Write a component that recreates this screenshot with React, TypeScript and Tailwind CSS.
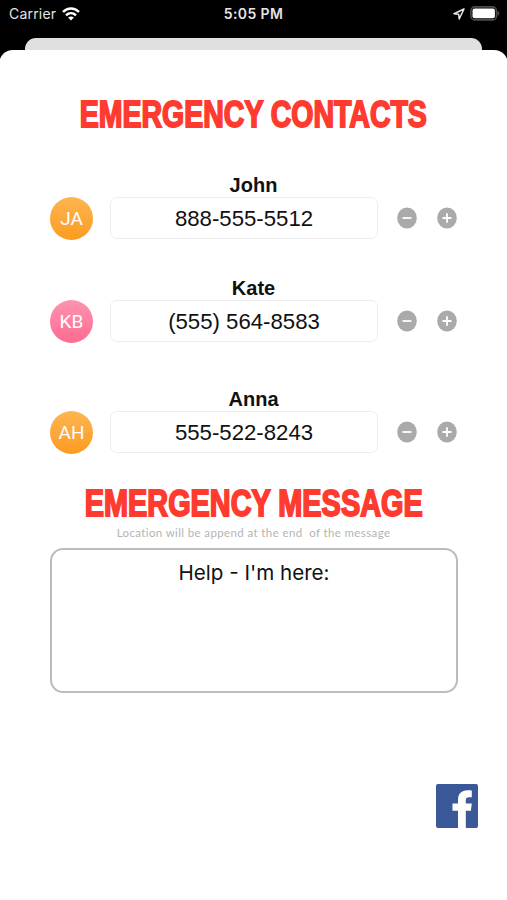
import clsx from "clsx";

const CONTACTS = [
  { initials: "JA", name: "John", phone: "888-555-5512", avatar: "from-[#fdb54f] to-[#fc9b1c]" },
  { initials: "KB", name: "Kate", phone: "(555) 564-8583", avatar: "from-[#ff92b0] to-[#fc6b92]" },
  { initials: "AH", name: "Anna", phone: "555-522-8243", avatar: "from-[#fdb54f] to-[#fc9b1c]" },
];

function StatusBar() {
  return (
    <div className="grid h-[38px] grid-cols-3 items-start px-2 pt-1.5 font-['Inter',sans-serif] text-[14px] leading-4 text-[#e4e4e4]">
      <div className="flex items-center gap-1.5 pl-px">
        <span className="text-[14px] tracking-[0.2px]">Carrier</span>
        <svg width="18" height="14" viewBox="0 0 18 14" fill="none" stroke="#fff" strokeWidth="2.5">
          <path d="M1 5C5.6.3 12.4.3 17 5" />
          <path d="M4 8.3c2.9-2.8 7.1-2.8 10 0" />
          <path d="M9 13.5 6.1 10.6c1.7-1.5 4.1-1.5 5.8 0Z" fill="#fff" stroke="none" />
        </svg>
      </div>
      <span className="text-center font-semibold tracking-[0.4px]">5:05 PM</span>
      <div className="flex items-center justify-end gap-[5px]">
        <svg width="12" height="12" viewBox="0 0 12 12" fill="none" stroke="#e8e8e8" strokeWidth="1.5" strokeLinejoin="round">
          <path d="M11 1 1 5.8l4.7.5.5 4.7Z" />
        </svg>
        <svg width="30" height="15" viewBox="0 0 30 15" className="-mr-px">
          <rect x=".9" y=".9" width="25.6" height="13" rx="4" fill="none" stroke="#4c4c4c" strokeWidth="1.6" />
          <rect x="2.5" y="2.5" width="22.4" height="9.8" rx="2" fill="#fff" />
          <path d="M27.5 4.8c2.4 1 2.4 4.2 0 5.2Z" fill="#4c4c4c" />
        </svg>
      </div>
    </div>
  );
}

function Heading({ children, className }: { children: string; className: string }) {
  return (
    <h1 className="flex h-[38px] justify-center font-['Liberation_Sans',sans-serif] text-[36px] font-bold leading-[38px] whitespace-nowrap text-[#ff3b30]">
      <span className={clsx("[-webkit-text-stroke:1.9px_#ff3b30]", className)}>{children}</span>
    </h1>
  );
}

function RoundButton({ plus = false }: { plus?: boolean }) {
  return (
    <button type="button" aria-label={plus ? "Add contact" : "Remove contact"}>
      <svg width="20" height="22" viewBox="0 0 20 22">
        <ellipse cx="10" cy="11" rx="9.8" ry="10.6" fill="#aaa" />
        <path d={plus ? "M5.5 11h9M10 6.2v9.6" : "M5.5 11h9"} stroke="#fff" strokeWidth="1.8" />
      </svg>
    </button>
  );
}

function ContactRow({ contact, className }: { contact: (typeof CONTACTS)[number]; className?: string }) {
  return (
    <div className={clsx("font-['Liberation_Sans',sans-serif]", className)}>
      <p className="h-6 text-center text-[20px] font-bold leading-6 text-[#111]">{contact.name}</p>
      <div className="flex h-[43px] items-start pl-[50px]">
        <div
          className={clsx(
            "flex size-[43px] shrink-0 items-center justify-center rounded-full bg-linear-to-b pt-px font-['Roboto',sans-serif] text-[19px] text-white",
            contact.avatar
          )}
        >
          {contact.initials}
        </div>
        <div className="ml-[17px] flex h-[42px] w-[268px] items-center justify-center rounded-[7px] border border-[#ededed] pt-px text-[22.2px] text-[#111]">
          {contact.phone}
        </div>
        <div className="ml-[19px] flex h-[42px] items-center gap-5">
          <RoundButton />
          <RoundButton plus />
        </div>
      </div>
    </div>
  );
}

export default function App() {
  return (
    <div className="flex h-[900px] w-[507px] flex-col overflow-hidden bg-black">
      <StatusBar />
      <div className="mx-[25px] h-3 shrink-0 rounded-t-[11px] bg-[#e0e0e0]" />
      <main className="-mx-px flex-1 rounded-t-[14px] bg-white px-px pt-[46px]">
        <Heading className="scale-x-[0.791]">EMERGENCY CONTACTS</Heading>
        <ContactRow contact={CONTACTS[0]} className="mt-[39px]" />
        <ContactRow contact={CONTACTS[1]} className="mt-9" />
        <ContactRow contact={CONTACTS[2]} className="mt-11" />
        <div className="mt-[31px]">
          <Heading className="scale-x-[0.802]">EMERGENCY MESSAGE</Heading>
        </div>
        <p className="mt-0.5 h-4 text-center font-['Lato',sans-serif] text-[11.5px] leading-4 tracking-[0.38px] whitespace-pre text-[#b4b4b4]">
          {"Location will be append at the end  of the message"}
        </p>
        <div className="mr-[49px] ml-[50px] mt-[7px] h-[145px] rounded-[13px] border-2 border-[#bcbcbc] pt-[9px] text-center font-['Inter',sans-serif] text-[20.6px] leading-7 text-[#111]">
          Help - I'm here:
        </div>
        <div className="mt-[91px] flex justify-end pr-[29px]">
          <svg width="42" height="44" viewBox="0 0 42 44">
            <rect width="42" height="44" rx="2" fill="#3b5998" />
            <path
              d="M22 44V26.7h-5.5v-7.2H22v-3.7c0-6 3.7-9.5 9.4-9.5 2.2 0 3.6.1 4.4.3v6.6h-2.6c-2.6 0-3.4 1.2-3.4 3.1v3.2h6l-.9 7.2h-5.1V44Z"
              fill="#fff"
            />
          </svg>
        </div>
      </main>
    </div>
  );
}
